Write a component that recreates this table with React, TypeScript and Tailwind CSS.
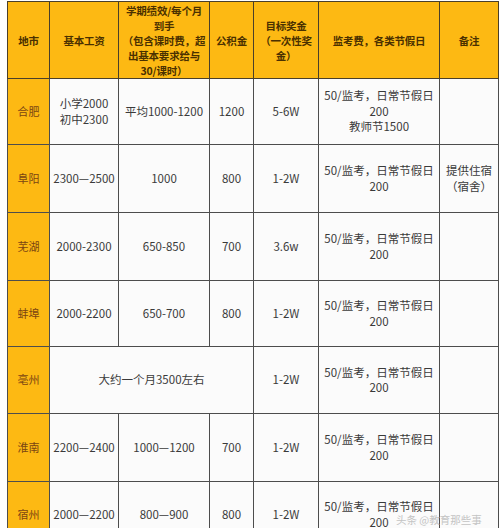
const font = { fontFamily: '"Noto Sans CJK SC", "Liberation Sans", sans-serif' }

type Row = {
  city: string
  base?: string[]
  perf?: string[]
  fund?: string
  merged?: string
  bonus: string
  exam: string[]
  note?: string[]
  h: string
}

const rows: Row[] = [
  { city: "合肥", base: ["小学2000", "初中2300"], perf: ["平均1000-1200"], fund: "1200", bonus: "5-6W", exam: ["50/监考，日常节假日", "200", "教师节1500"], h: "h-[66px]" },
  { city: "阜阳", base: ["2300—2500"], perf: ["1000"], fund: "800", bonus: "1-2W", exam: ["50/监考，日常节假日", "200"], note: ["提供住宿", "（宿舍）"], h: "h-[68px]" },
  { city: "芜湖", base: ["2000-2300"], perf: ["650-850"], fund: "700", bonus: "3.6w", exam: ["50/监考，日常节假日", "200"], h: "h-[68px]" },
  { city: "蚌埠", base: ["2000-2200"], perf: ["650-700"], fund: "800", bonus: "1-2W", exam: ["50/监考，日常节假日", "200"], h: "h-[66px]" },
  { city: "亳州", merged: "大约一个月3500左右", bonus: "1-2W", exam: ["50/监考，日常节假日", "200"], h: "h-[67px]" },
  { city: "淮南", base: ["2200—2400"], perf: ["1000—1200"], fund: "700", bonus: "1-2W", exam: ["50/监考，日常节假日", "200"], h: "h-[68px]" },
  { city: "宿州", base: ["2000—2200"], perf: ["800—900"], fund: "800", bonus: "1-2W", exam: ["50/监考，日常节假日", "200"], h: "h-[66px]" },
]

function Lines({ items }: { items?: string[] }) {
  if (!items) return null
  return (
    <>
      {items.map((t, i) => (
        <div key={i}>{t}</div>
      ))}
    </>
  )
}

const th = "border border-[#4a3f2a] bg-[#fdb913] text-[#4a3000] font-bold text-[10.5px] leading-[15px] tracking-[-0.2px] whitespace-nowrap text-center align-middle p-0"
const td = "border border-[#4d4d4d] text-[#3a3a3a] text-[11.5px] leading-[15.5px] whitespace-nowrap text-center align-middle p-0"

export default function App() {
  return (
    <div className="relative w-[500px] h-[528px] overflow-hidden bg-white pl-[7px] pr-[2px] pt-px" style={font}>
      <table className="table-fixed border-collapse w-[491px]">
        <colgroup>
          <col className="w-[42px]" />
          <col className="w-[69px]" />
          <col className="w-[91px]" />
          <col className="w-[44px]" />
          <col className="w-[65px]" />
          <col className="w-[121px]" />
          <col className="w-[59px]" />
        </colgroup>
        <thead>
          <tr className="h-[77px]">
            <th className={th}>地市</th>
            <th className={th}>基本工资</th>
            <th className={th}>
              学期绩效/每个月
              <br />到手
              <br />（包含课时费，超
              <br />出基本要求给与
              <br />30/课时）
            </th>
            <th className={th}>公积金</th>
            <th className={th}>
              目标奖金
              <br />（一次性奖
              <br />金）
            </th>
            <th className={th}>监考费，各类节假日</th>
            <th className={th}>备注</th>
          </tr>
        </thead>
        <tbody>
          {rows.map((r) => (
            <tr key={r.city} className={r.h}>
              <td className={`${td} bg-[#fdb913] !text-[#7b4512] !text-[11px]`}>{r.city}</td>
              {r.merged ? (
                <td colSpan={3} className={`${td} bg-[#fbfbfb]`}>
                  {r.merged}
                </td>
              ) : (
                <>
                  <td className={`${td} bg-[#fbfbfb]`}>
                    <Lines items={r.base} />
                  </td>
                  <td className={`${td} bg-[#fbfbfb]`}>
                    <Lines items={r.perf} />
                  </td>
                  <td className={`${td} bg-[#fbfbfb]`}>{r.fund}</td>
                </>
              )}
              <td className={`${td} bg-[#fbfbfb]`}>{r.bonus}</td>
              <td className={`${td} bg-[#fbfbfb]`}>
                <Lines items={r.exam} />
              </td>
              <td className={`${td} bg-[#fbfbfb]`}>
                <Lines items={r.note} />
              </td>
            </tr>
          ))}
        </tbody>
      </table>
      <div className="absolute left-[396px] top-[512px] text-[10.5px] text-[#c4c4c4] whitespace-nowrap">
        头条 @教育那些事
      </div>
    </div>
  )
}
